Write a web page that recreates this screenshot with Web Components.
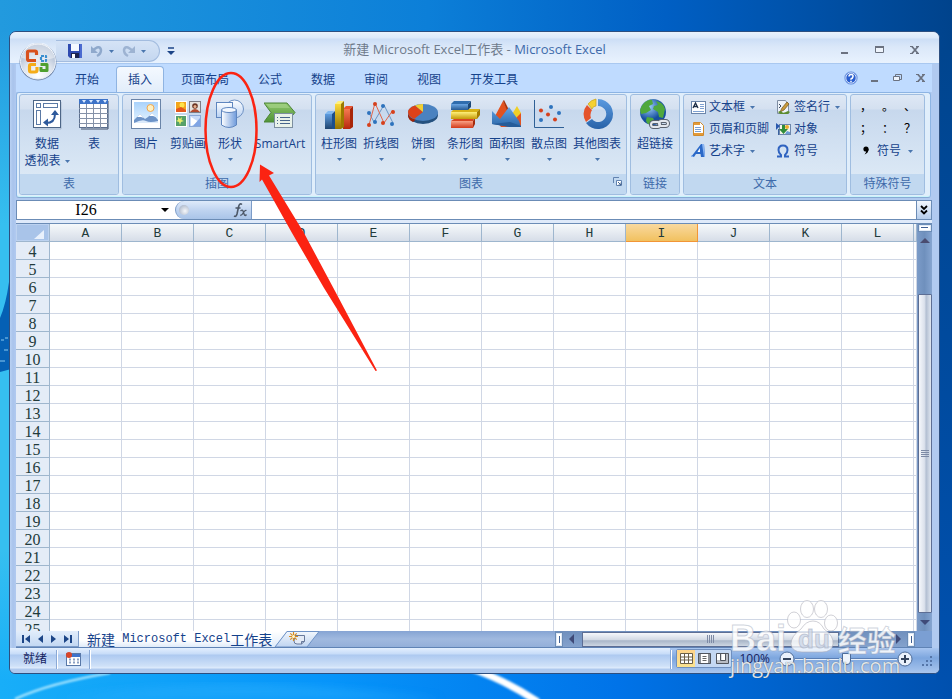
<!DOCTYPE html>
<html lang="zh-CN">
<head>
<meta charset="utf-8">
<title>新建 Microsoft Excel工作表 - Microsoft Excel</title>
<style>
html, body { height: 100%; margin: 0; }
body { font: 12px/16px "Open Sans", "Noto Sans CJK SC", sans-serif; color: #15428b; overflow: hidden; }
</style>
</head>
<body>
<xl-desktop>
  <xl-window>
    <xl-title-bar slot="title" document="新建 Microsoft Excel工作表" app="Microsoft Excel"></xl-title-bar>
    <xl-office-button slot="office"></xl-office-button>
    <xl-tab-strip slot="tabs" tabs="开始,插入,页面布局,公式,数据,审阅,视图,开发工具" selected="插入"></xl-tab-strip>
    <xl-ribbon slot="ribbon">
      <xl-group label="表">
        <xl-big-button icon="pivot" size="wide" menu="inline">数据<br>透视表</xl-big-button>
        <xl-big-button icon="table">表</xl-big-button>
      </xl-group>
      <xl-group label="插图">
        <xl-big-button icon="picture">图片</xl-big-button>
        <xl-big-button icon="clipart">剪贴画</xl-big-button>
        <xl-big-button icon="shapes" menu="below">形状</xl-big-button>
        <xl-big-button icon="smartart" size="wider">SmartArt</xl-big-button>
      </xl-group>
      <xl-group label="图表" launcher>
        <xl-big-button icon="column" menu="below">柱形图</xl-big-button>
        <xl-big-button icon="line" menu="below">折线图</xl-big-button>
        <xl-big-button icon="pie" menu="below">饼图</xl-big-button>
        <xl-big-button icon="bar" menu="below">条形图</xl-big-button>
        <xl-big-button icon="area" menu="below">面积图</xl-big-button>
        <xl-big-button icon="scatter" menu="below">散点图</xl-big-button>
        <xl-big-button icon="donut" size="wide" menu="below">其他图表</xl-big-button>
      </xl-group>
      <xl-group label="链接">
        <xl-big-button icon="globe">超链接</xl-big-button>
      </xl-group>
      <xl-group label="文本">
        <xl-button-grid>
          <xl-small-button icon="textbox" menu>文本框</xl-small-button>
          <xl-small-button icon="sign" menu>签名行</xl-small-button>
          <xl-small-button icon="header">页眉和页脚</xl-small-button>
          <xl-small-button icon="object">对象</xl-small-button>
          <xl-small-button icon="wordart" menu>艺术字</xl-small-button>
          <xl-small-button icon="omega">符号</xl-small-button>
        </xl-button-grid>
      </xl-group>
      <xl-group label="特殊符号">
        <xl-symbols></xl-symbols>
      </xl-group>
    </xl-ribbon>
    <xl-formula-bar slot="formula" cell="I26"></xl-formula-bar>
    <xl-grid slot="grid" first="4" last="25" columns="ABCDEFGHIJKL" active="I"></xl-grid>
    <xl-sheet-bar slot="sheets"></xl-sheet-bar>
    <xl-status-bar slot="status">就绪</xl-status-bar>
  </xl-window>
  <xl-callout slot="over"></xl-callout>
  <xl-watermark slot="over"></xl-watermark>
</xl-desktop>

<script>
const S = (w, h, body) => `<svg width="${w}" height="${h}" viewBox="0 0 ${w} ${h}" aria-hidden="true">${body}</svg>`;
const lg = (id, a, b, v = true) => `<linearGradient id="${id}" x1="0" y1="0" x2="${v ? 0 : 1}" y2="${v ? 1 : 0}"><stop offset="0" stop-color="${a}"/><stop offset="1" stop-color="${b}"/></linearGradient>`;
const ARROW = S(5, 3, '<path d="M0 0h5L2.500 3z" fill="#4a76ae"/>');

const ICONS = {
  pivot: S(32, 32, `<path d="M4 31h26V4" fill="none" stroke="#8fa0b8" opacity=".6"/><rect x="2.500" y="2.500" width="27" height="27" fill="#fff" stroke="#4d6687"/>
    <g fill="#fff" stroke="#5b7aa5"><rect x="5.500" y="5.500" width="4" height="4"/><rect x="12.500" y="5.500" width="14" height="4"/><rect x="5.500" y="12.500" width="4" height="14"/></g>
    <path d="M15 25q9 0 9-9" fill="none" stroke="#2f5a9c" stroke-width="2"/><path d="M20 17l4-5 4 5zM17 20.500v8l-5-4z" fill="#2f5a9c"/>`),
  table: S(32, 32, `<path d="M3 31h27V3" fill="none" stroke="#44536a"/><rect x="1.500" y="1.500" width="28" height="28" fill="#fff" stroke="#5b6f8e"/><rect x="1" y="1" width="29" height="5" fill="#3d73c8"/>
    <path d="M4 2h4l-2 3zM11 2h4l-2 3zM18 2h4l-2 3zM25 2h4l-2 3z" fill="#dcebff"/><path d="M8.500 6v24M15.500 6v24M22.500 6v24M1 10.500h29M1 15.500h29M1 20.500h29M1 25.500h29" stroke="#8592a8"/>`),
  picture: S(32, 32, `<defs>${lg('p', '#a9d2fb', '#e6f4ff')}</defs><rect x="1.500" y="1.500" width="29" height="29" fill="#fff" stroke="#6a84a8"/><rect x="4" y="4" width="24" height="21" fill="url(#p)"/>
    <circle cx="20.500" cy="10" r="3.500" fill="#fff0c0" stroke="#f2a64c"/><path d="M4 25v-3l6-6 5 5 3-2 4-4 6 7v3z" fill="#6e94c8"/><path d="M7 19l3-3 4 4-3-1zM19 18l3-3 4 4-3-1z" fill="#fff"/><path d="M4 25q8-4 12-2t12 0v2z" fill="#dceafa"/>`),
  clipart: S(32, 32, `<g stroke="#fff"><rect x="3.500" y="3.500" width="11" height="11" fill="#f3a51c"/><rect x="17.500" y="3.500" width="11" height="11" fill="#e6e2de" stroke="#7d7d86"/><rect x="3.500" y="17.500" width="11" height="11" fill="#57a06a"/><rect x="17.500" y="17.500" width="11" height="11" fill="#c8dbf8" stroke="#8aa8d8"/></g>
    <circle cx="10" cy="7" r="2.500" fill="#ffe34a"/><path d="M4 11l5-2 5 3v2H4z" fill="#e5571d"/><circle cx="23" cy="8" r="2.800" fill="#6b3423"/><circle cx="23" cy="8.500" r="1.500" fill="#e9b08d"/><path d="M18 14q5-6 10 0z" fill="#b34a2e"/>
    <path d="M6 19l2 2 2-2-.5 3 2.500 1-3 1-1 3-1-3-3-1 2-1z" fill="#e6ee6a"/><path d="M19 19l8 5-8 4z" fill="#fff"/><path d="M21 28l7-8v8z" fill="#7fa4e4"/>`),
  shapes: S(32, 32, `<defs>${lg('a', '#fdfeff', '#b8d1f2')}${lg('b', '#fff', '#6f9bdc', false)}</defs><circle cx="20.500" cy="11" r="9" fill="url(#a)" stroke="#6f92c4"/><rect x="2.500" y="4.500" width="16" height="15" fill="url(#a)" stroke="#5f86bf"/>
    <path d="M7.500 12v15q7.500 5 15 0V12z" fill="url(#b)" stroke="#5f86bf"/><ellipse cx="15" cy="12" rx="7.500" ry="2.500" fill="#f3f8ff" stroke="#5f86bf"/>`),
  smartart: S(32, 32, `<defs>${lg('g', '#8fc66c', '#4f9437')}</defs><path d="M0 5h23l8 9.500L23 24H0l7-9.500z" fill="url(#g)" stroke="#4c8538"/><path d="M2 6h20l4 4H6z" fill="#a8d58c" opacity=".6"/><rect x="10.500" y="15.500" width="18" height="14" fill="#e9f2ea" stroke="#7c8fa0"/><path d="M16 19.500h10M16 22.500h10M16 25.500h10" stroke="#47658c"/><path d="M13 19.500h1M13 22.500h1M13 25.500h1" stroke="#47658c"/>`),
  column: S(32, 32, `<defs>${lg('b', '#5d9ce0', '#1f4470')}${lg('y', '#fbd93a', '#987400')}${lg('r', '#f47a52', '#b8260c')}</defs>
    <path d="M2 16h7v15H2z" fill="url(#b)"/><path d="M2 16l3-3h6l-2 3z" fill="#7fb7ef"/><path d="M9 16l3-3v18H9z" fill="#1c4f8c"/>
    <path d="M20 11h7v20h-7z" fill="url(#r)"/><path d="M20 11l3-3h7l-3 3z" fill="#ee5430"/><path d="M27 11l3-3v21l-3 2z" fill="#a82508"/>
    <path d="M12 6h6v25h-6z" fill="url(#y)"/><path d="M12 6l3-3h6l-3 3z" fill="#fff07a"/><path d="M18 6l3-3v26l-3 2z" fill="#9c7900"/>`),
  line: S(32, 32, `<g fill="none"><path d="M4 15l5 9 10-17 9 18" stroke="#6b96c4"/><path d="M4 27l6-22 9 20 9-13" stroke="#e0654a"/></g><g fill="#2e73bd"><circle cx="4" cy="15" r="2"/><circle cx="10" cy="24" r="2"/><circle cx="18" cy="8" r="2"/><circle cx="27" cy="26" r="2"/></g><g fill="#d6401c"><circle cx="4" cy="27" r="2"/><circle cx="10" cy="6" r="2"/><circle cx="18" cy="25" r="2"/><circle cx="28" cy="14" r="2"/></g>`),
  pie: S(32, 32, `<ellipse cx="16" cy="17" rx="15" ry="9" fill="#25517f"/><path d="M1 14v3q0 5 5 7l10-9z" fill="#a32306"/><ellipse cx="16" cy="14.500" rx="15" ry="8.500" fill="#4a82c0"/><path d="M16 14L7 21Q1 18 1 14q0-4 7-6.500z" fill="#dd4219"/><path d="M16 14L8 7.500q3-1.500 8-1.500z" fill="#f2cf32"/>`),
  bar: S(32, 32, `<defs>${lg('b', '#6ba6e4', '#265a94')}${lg('y', '#fff07a', '#c49a08')}${lg('r', '#f9a286', '#d23a1a')}</defs>
    <path d="M2 23h22v7H2z" fill="url(#r)"/><path d="M2 23l3-2h20l-1 2z" fill="#d84623"/><path d="M24 23l2-3v6l-2 4z" fill="#a52a0c"/>
    <path d="M2 14h26v7H2z" fill="url(#y)"/><path d="M2 14l3-3h26l-3 3z" fill="#d9b316"/><path d="M28 14l3-3v6l-3 4z" fill="#a47d00"/>
    <path d="M2 6h17v6H2z" fill="url(#b)"/><path d="M2 6l3-3h17l-3 3z" fill="#2e6cae"/><path d="M19 6l3-3v6l-3 3z" fill="#1c4878"/>`),
  area: S(32, 32, `<defs>${lg('b', '#62a4e6', '#2b66a7')}</defs><path d="M20 18l6-10 4 7v12z" fill="#efcf26"/><path d="M3 20L12 3l6 12 4 8 8-8v14H10z" fill="#e2521f"/><path d="M12 3l1-1 6 12-1 3z" fill="#a83208"/><path d="M1 13l8 8 9-12 10 14 2 6H19L1 26z" fill="url(#b)"/><path d="M1 26l18 3h11v-1l-11-4z" fill="#265c99"/>`),
  scatter: S(32, 32, `<path d="M1.500 2v27.500H31" fill="none" stroke="#2f6096"/><g fill="#2e73bd"><circle cx="18" cy="9" r="2"/><circle cx="26" cy="15" r="2"/><circle cx="8" cy="22" r="2"/></g><g fill="#d6401c"><circle cx="8" cy="12.500" r="2"/><circle cx="15" cy="16.500" r="2"/><circle cx="22" cy="21.500" r="2"/></g>`),
  donut: S(32, 32, `<defs>${lg('b', '#5a9ae0', '#2862a8')}</defs><path d="M17 1a15 15 0 1 1-12 24l6-4a8 8 0 1 0 6-13z" fill="url(#b)"/><path d="M5 24A14 14 0 0 1 6 7l5 5a9 9 0 0 0-1 8z" fill="#e4532b"/><path d="M7 6q3-4 8-5v7q-3 0-4 3z" fill="#f5d132" stroke="#c9a017" stroke-width=".7"/>`),
  globe: S(32, 32, `<defs><radialGradient id="o" cx=".35" cy=".3"><stop offset="0" stop-color="#9fd0fb"/><stop offset="1" stop-color="#164f9e"/></radialGradient></defs><circle cx="14" cy="14" r="13" fill="url(#o)"/><path d="M5 5q5-4 8-3l1 4-4 2 2 4-5 3-5 1-1-4q1-4 4-7zM17 3q7 1 9 8l-2 9-4-1-1-5-5-3 1-3 4-1zM8 19l6 1 2 4-4 3q-5-1-5-5z" fill="#4fa83c"/>
    <g fill="none" stroke="#59626e" stroke-width="4"><rect x="12" y="24" width="9" height="5" rx="2.500"/><rect x="20" y="23" width="9" height="5" rx="2.500"/></g><g fill="none" stroke="#e4e8ee" stroke-width="2"><rect x="12" y="24" width="9" height="5" rx="2.500"/><rect x="20" y="23" width="9" height="5" rx="2.500"/></g>`),
  textbox: S(16, 16, `<rect x="1.500" y="2.500" width="14" height="12" fill="#fff" stroke="#6c86ab"/><path d="M3 9l2.500-5L8 9M4 7.500h3" fill="none" stroke="#1d2d46" stroke-width="1.300"/><path d="M10 5.500h4M10 7.500h4M10 9.500h4M3 12.500h11" stroke="#7ea1d2"/>`),
  header: S(16, 16, `<path d="M3.500 1.500h7l3 3v10h-10z" fill="#fff" stroke="#d08a2c"/><path d="M4 3h6M4 13h9" stroke="#e39a37" stroke-width="2"/><path d="M5 6.500h6M5 8.500h6M5 10.500h6" stroke="#7ba0d2"/>`),
  wordart: S(16, 16, `<path d="M1 14L11 1h3l1 13h-4l-.5-3H6l-2 3z" fill="#2b69c8"/><path d="M7.500 9H10l-.2-4z" fill="#fff"/><path d="M12 1l2 13h1L14 1zM1 12l3 2H1z" fill="#8ab5f2"/>`),
  sign: S(16, 16, `<path d="M2.500 1.500h8l3 4v9h-11z" fill="#eef3fa" stroke="#7f8ea3"/><path d="M4 5l2 2M4 9l2-2" stroke="#3b4b62"/><path d="M14 5l-5 6-4 2 2-4 5-6z" fill="#c89a3c" stroke="#705018" stroke-width=".7"/><path d="M3 13q3-2 4 0t6-1l2 1-2 2H5z" fill="#5c8c30"/>`),
  object: S(16, 16, `<rect x="4.500" y="3.500" width="11" height="10" fill="#f3f4e6" stroke="#6c86ab"/><circle cx="12" cy="6" r="2" fill="#edae2f"/><path d="M10 13l2-3 3 1v2z" fill="#6b9cd6"/><path d="M1 2l4 3-4 4z" fill="#2959ae"/><path d="M7 4h3v4h3l-4.500 5L4 8h3z" fill="#2f8c3a"/><path d="M3 8h1v6h-1z" fill="#3b62a0"/>`),
  omega: S(16, 16, `<path d="M2 13.500h4v-1.500Q3.500 10 3.500 7q0-4.500 4.500-4.500T12.500 7q0 3-2.500 5v1.500h4" fill="none" stroke="#2f63c0" stroke-width="2"/>`),
  comma: S(8, 12, `<circle cx="4" cy="4" r="2.600" fill="#000"/><path d="M6.600 4q0 4-4 5.500Q5 7 4 5z" fill="#000"/>`),
  save: S(16, 16, `<path d="M1 1h14v14H3l-2-2z" fill="#2f4bb0"/><path d="M4 1h8v7H4z" fill="#f4f8ff"/><path d="M4 10h8v5H4z" fill="#1b2450"/><path d="M5 11h3v4H5z" fill="#fff"/><path d="M13 1h2v14h-2z" fill="#4b6bd0"/>`),
  undo: S(16, 16, `<path d="M3 8q8-7 9-1 0 4-4 6" fill="none" stroke="#8fa9cc" stroke-width="2.500"/><path d="M2 3v7h7z" fill="#8fa9cc"/>`),
  redo: S(16, 16, `<path d="M12 8q-8-7-9-1 0 4 4 6" fill="none" stroke="#9db3d2" stroke-width="2.500"/><path d="M14 3v7H7z" fill="#9db3d2"/>`),
  more: S(8, 8, `<path d="M1 1h6" stroke="#1c4587" stroke-width="1.500"/><path d="M0 4h8L4 8z" fill="#1c4587"/>`),
  min: S(10, 12, `<path d="M1 9h7" stroke="#6b7280" stroke-width="2"/>`),
  max: S(12, 12, `<path d="M1.500 2.500h8v6h-8z" fill="#eef4fc" stroke="#6b7280"/><path d="M1 3h9" stroke="#6b7280" stroke-width="2"/>`),
  restore: S(12, 12, `<path d="M3.500 4V2.500h6v5H8" fill="none" stroke="#6b7280"/><path d="M1.500 4.500h6v4h-6z" fill="#eef4fc" stroke="#6b7280"/>`),
  close: S(10, 12, `<path d="M2 2.500l6 7M8 2.500l-6 7" stroke="#6b7280" stroke-width="1.800"/><path d="M0 2.500h3M6 2.500h3M0 9.500h3M6 9.500h3" stroke="#6b7280"/>`),
  help: S(14, 14, `<circle cx="7" cy="7" r="6.300" fill="#2a5fd0" stroke="#8eb0ea"/><circle cx="7" cy="7" r="5.200" fill="none" stroke="#fff" stroke-width=".8"/><path d="M5 5.500Q5 3.500 7.200 3.500T9 5.500 7 8v.8M7 9.800v1.400" fill="none" stroke="#fff" stroke-width="1.500"/>`),
  launcher: S(9, 9, `<path d="M.5 6V.5H6" fill="none" stroke="#6283b0"/><path d="M3.500 3.500h5v5h-5z" fill="#fff" stroke="#6283b0"/><path d="M5 5l3 3M8 5.500V8H5.500" stroke="#44648f" fill="none"/>`),
  fx: S(16, 16, `<g fill="none" stroke="#4c5767"><path d="M10 2.500Q7.500.5 6.500 5L5 12q-.8 3.200-3 2M3.500 6h5" stroke-width="1.600"/><path d="M8.500 9q2-2 2.700.5l1 3q.7 2 2.300 0M14.500 8.500q-1.500-.8-3 2t-3.200 3" stroke-width="1.300"/></g>`),
  first: S(10, 8, `<path d="M1 0h2v8H1zM9 0v8L4 4z" fill="#1c4587"/>`),
  prev: S(6, 8, `<path d="M5 0v8L0 4z" fill="#1c4587"/>`),
  next: S(6, 8, `<path d="M1 0v8l5-4z" fill="#1c4587"/>`),
  last: S(10, 8, `<path d="M7 0h2v8H7zM1 0v8l5-4z" fill="#1c4587"/>`),
  left: S(6, 10, `<path d="M5 0v10L0 5z" fill="#3f4a78"/>`),
  right: S(6, 10, `<path d="M1 0v10l5-5z" fill="#3f4a78"/>`),
  up: S(10, 6, `<path d="M0 5h10L5 0z" fill="#4a4c70"/>`),
  down: S(10, 6, `<path d="M0 1h10L5 6z" fill="#3f4a78"/>`),
  expand: S(8, 10, `<path d="M1 1l3 3 3-3M1 5.500l3 3 3-3" fill="none" stroke="#000" stroke-width="1.800"/>`),
  macro: S(16, 16, `<rect x="1.500" y="2.500" width="14" height="12" fill="#fff" stroke="#5878a8"/><path d="M5 3h10v3H5z" fill="#3f73cc"/><path d="M4 8.500h10M4 11.500h10" stroke="#8aa0c4" stroke-width="2" stroke-dasharray="2 2"/><circle cx="4" cy="4" r="3" fill="#d9452a"/>`),
  newsheet: S(18, 15, `<path d="M6 3.500h9.500v6l-3 2.500H8q-3 0-3-3z" fill="#e4ebf6" stroke="#68799a"/><path d="M12.500 12V9.500h3" fill="#9fb0cc" stroke="#68799a"/><path d="M4.500 0v9M0 4.500h9M1.300 1.300l6.400 6.400M7.700 1.300L1.300 7.700" stroke="#d98c1f" stroke-width="1.200"/><circle cx="4.500" cy="4.500" r="1.500" fill="#fff6c8"/>`),
  normal: S(13, 11, `<path d="M.5.5h12v10H.5z" fill="#fff" stroke="#6b5f48"/><path d="M4.500 0v11M8.500 0v11M0 4h13M0 7h13" stroke="#6b5f48"/>`),
  layout: S(13, 11, `<path d="M.5.5h12v10H.5z" fill="#8b8f96" stroke="#50555e"/><path d="M3 1h7v9H3z" fill="#fff"/><path d="M4.500 3.500h4M4.500 5.500h4M4.500 7.500h4" stroke="#666"/>`),
  breaks: S(13, 11, `<path d="M.5.5h12v10H.5z" fill="#b8bcc4" stroke="#50555e"/><path d="M1 1h3v6H1zM5.500 1H9v6H5.500z" fill="#fff"/><path d="M4.500 0v7.500h5V0" fill="none" stroke="#50555e"/>`),
  minus: S(16, 16, `<circle cx="8" cy="8" r="7" fill="#e9f1fc" stroke="#4e6c99"/><path d="M4 8h8" stroke="#33435c" stroke-width="2"/>`),
  plus: S(16, 16, `<circle cx="8" cy="8" r="7" fill="#e9f1fc" stroke="#4e6c99"/><path d="M4 8h8M8 4v8" stroke="#33435c" stroke-width="2"/>`),
  grip: S(12, 12, `<g fill="#5475a8"><path d="M9 1h2v2H9zM5 5h2v2H5zM9 5h2v2H9zM1 9h2v2H1zM5 9h2v2H5zM9 9h2v2H9z"/></g>`),
  office: S(38, 38, `<defs><radialGradient id="w" cx=".5" cy=".9" r=".85"><stop offset="0" stop-color="#fff"/><stop offset=".5" stop-color="#dfe5ee"/><stop offset="1" stop-color="#9fb0ca"/></radialGradient></defs>
    <circle cx="19" cy="19" r="18.500" fill="#7489ab"/><circle cx="19" cy="18.500" r="17.500" fill="url(#w)" stroke="#eef3fa"/><path d="M3 15a16 16 0 0 1 32 0q-16 5-32 0z" fill="#fff" opacity=".45"/>
    <g fill="none" stroke-width="3.200" stroke-linejoin="round"><path d="M17 17.500h-7q-1.500 0-1.500-1.500V9.500Q8.500 8 10 8h6q1.500 0 1.500 1.500V12" stroke="#d8501c"/><path d="M22 13h5v5h-5z" stroke="#3a8fd0" stroke-width="2.200" stroke-dasharray="3 1"/><path d="M17 21.500h-5q-1.500 0-1.500 1.500v4q0 2 1.500 2h4q2 0 2-2v-3" stroke="#f5ac18"/><path d="M21.500 21.500H28v6h-6V24" stroke="#4fa02f" stroke-width="3"/></g>`),
};

/* Registers an element whose shadow root is cloned from a template built by render(). */
function define(name, css, render) {
  customElements.define(name, class extends HTMLElement {
    connectedCallback() {
      if (this.shadowRoot) return;
      const t = document.createElement('template');
      t.innerHTML = `<style>*{box-sizing:border-box}button{all:unset;box-sizing:border-box;cursor:default}svg{display:block;flex:none}${css}</style>${render(this)}`;
      this.attachShadow({ mode: 'open' }).append(t.content.cloneNode(true));
    }
  });
}
const btn = (icon, label, cls = '') => `<button class="${cls}" aria-label="${label}">${ICONS[icon]}</button>`;

define('xl-desktop', `
  :host{display:block;position:relative;min-height:100vh;padding:31px 12px 25px 9px;box-sizing:border-box}
  .wall{position:absolute;inset:0;width:100%;height:100%}
  main{position:relative;height:calc(100vh - 56px)}`,
  () => `<svg class="wall" viewBox="0 0 952 699" preserveAspectRatio="none" aria-hidden="true"><defs>
    <linearGradient id="h" x1="0" x2="1"><stop offset="0" stop-color="#229ade"/><stop offset=".45" stop-color="#0c7fd8"/><stop offset=".7" stop-color="#005fc4"/><stop offset="1" stop-color="#00438c"/></linearGradient>
    <linearGradient id="f" x1="0" x2="1"><stop offset="0" stop-color="#18aef8"/><stop offset=".35" stop-color="#0694fa"/><stop offset=".65" stop-color="#0073e8"/><stop offset="1" stop-color="#0050ae"/></linearGradient>
    <linearGradient id="l" x1="0" y1="0" x2="0" y2="1"><stop offset="0" stop-color="#229ade"/><stop offset=".3" stop-color="#36bff0"/><stop offset=".8" stop-color="#36bff0"/><stop offset="1" stop-color="#18aef8"/></linearGradient>
    ${lg('r', '#00458f', '#0050ae')}
    <filter id="b"><feGaussianBlur stdDeviation="1"/></filter><filter id="c"><feGaussianBlur stdDeviation="4"/></filter></defs>
    <rect width="952" height="699" fill="url(#f)"/><rect width="952" height="60" fill="url(#h)"/><rect x="936" y="50" width="16" height="630" fill="url(#r)"/>
    <rect y="30" width="20" height="650" fill="url(#l)"/><path d="M0 372V318q6-14 9-36h6v86z" fill="#0560b4"/><path d="M1 340h3M4 350h4M0 361h5M5 338h3" stroke="#8cc9f0"/>
    <path d="M15 699Q50 683 110 673" stroke="#b9ecff" stroke-width="2" fill="none" filter="url(#b)"/>
    <path d="M60 699Q200 676 330 688T440 699z" fill="#2aaefc" opacity=".5" filter="url(#c)"/><path d="M470 668Q505 680 538 702" stroke="#fff" stroke-width="7" fill="none" filter="url(#b)"/></svg>
    <main><slot></slot></main><slot name="over"></slot>`);

define('xl-window', `
  :host{display:flex;flex-direction:column;position:relative;height:100%;box-sizing:border-box;border:1px solid #2d4f80;border-radius:7px 7px 6px 6px;background:#b1caf0;overflow:hidden}
  .frame{flex:1;min-height:0;display:flex;flex-direction:column;padding:0 7px 0 6px;background:linear-gradient(90deg,#b9d1f3,#a9c4ec 3px,#b1caf0 6px)}
  .sheet{flex:1;min-height:0;margin-top:3px;display:flex;flex-direction:column;border-top:1px solid #6b8cb6;box-shadow:0 -3px #dfeafa}
  ::slotted([slot=office]){position:absolute;left:9px;top:11px}`,
  () => `<slot name="title"></slot><div class="frame"><slot name="tabs"></slot><slot name="ribbon"></slot><slot name="formula"></slot>
    <div class="sheet"><slot name="grid"></slot><slot name="sheets"></slot></div></div><slot name="status"></slot><slot name="office"></slot>`);

define('xl-title-bar', `
  :host{display:grid;grid-template-columns:1fr auto 1fr;align-items:center;height:32px;box-sizing:border-box;border-bottom:1px solid #a9c8f0;
    background:linear-gradient(#e9f2fd 0,#dce9fa 6px,#ccdef6 7px,#dbe8f9 15px,#e8f2fe 31px)}
  .qat{display:flex;align-items:center;gap:7px;margin-left:46px;height:22px}
  .pill{display:flex;align-items:center;height:22px;padding:0 13px 0 11px;border:1px solid #a3bcdf;border-left:0;border-radius:0 11px 11px 0;background:linear-gradient(#d5e3f6,#c4d7f0);margin-top:7px}
  .pill button:nth-child(1){margin-right:6px}.pill button:nth-child(2),.pill button:nth-child(4){margin-right:4px}.pill button:nth-child(3){margin-right:7px}
  .more{margin-top:7px}
  h1{margin:2px 0 0;font:inherit;font-size:13px;color:#3e6aaa;white-space:pre} h1 span{color:#6f7b8c}
  .win{display:flex;justify-content:flex-end;gap:24px;padding:4px 19px 0 0}`,
  h => `<div class="qat"><div class="pill">${btn('save', '保存')}${btn('undo', '撤消')}<button aria-label="撤消列表">${ARROW}</button>${btn('redo', '恢复')}<button aria-label="恢复列表">${ARROW}</button></div>${btn('more', '自定义快速访问工具栏', 'more')}</div>
    <h1><span>${h.getAttribute('document')} - </span>${h.getAttribute('app')}</h1>
    <div class="win">${btn('min', '最小化')}${btn('max', '最大化')}${btn('close', '关闭')}</div>`);

define('xl-office-button', `:host{display:block}`, () => btn('office', 'Office 按钮'));

define('xl-tab-strip', `
  :host{display:flex;justify-content:space-between;align-items:flex-end;height:28px;padding-left:47px;background:#bfdbff}
  nav{display:flex;gap:5px} nav button{height:26px;padding:0 11px;line-height:24px;border:1px solid transparent;border-bottom:0;white-space:nowrap}
  nav button[aria-selected=true]{border-color:#8fb4e2;border-radius:4px 4px 0 0;background:linear-gradient(#f4f9ff,#e2edfa);box-shadow:0 1px #dfe9f6}
  .right{display:flex;align-items:center;align-self:stretch;gap:12px;padding-right:6px}`,
  h => `<nav role="tablist">${h.getAttribute('tabs').split(',').map(t => `<button role="tab" aria-selected="${t === h.getAttribute('selected')}">${t}</button>`).join('')}</nav>
    <div class="right">${btn('help', '帮助')}${btn('min', '最小化工作簿')}${btn('restore', '还原工作簿')}${btn('close', '关闭工作簿')}</div>`);

define('xl-ribbon', `
  :host{display:flex;gap:3px;margin:0 1px 2px 0;padding:1px 2px 2px;border:1px solid #8db4e3;border-bottom-color:#87aad4;border-radius:3px;background:#e0eefb;box-shadow:inset 0 -1px #c6f4fb;
    box-sizing:border-box;height:106px}`, () => `<slot></slot>`);

define('xl-group', `
  :host{display:flex;flex-direction:column;box-sizing:border-box;border:1px solid #9fbde0;border-radius:3px;overflow:hidden;background:linear-gradient(#dee8f5 0,#d4e0f0 14px,#c7d8ed 15px,#d2e1f2 50px,#dbe8f5 80px)}
  .body{flex:1;display:flex;padding:0 2px}
  footer{position:relative;height:20px;background:#c1d8f0;color:#3e6aaa;text-align:center;line-height:20px}
  footer button{position:absolute;right:4px;top:3px}`,
  h => `<div class="body"><slot></slot></div><footer>${h.getAttribute('label')}${h.hasAttribute('launcher') ? btn('launcher', '图表选项') : ''}</footer>`);

define('xl-big-button', `
  :host{display:block;min-width:42px} :host([icon=table]),:host([icon=globe]){min-width:44px} :host([size=wide]){min-width:54px} :host([size=wider]){min-width:58px} :host([icon=pivot]){min-width:50px}
  button{display:flex;flex-direction:column;align-items:center;width:100%;padding-top:3px;white-space:nowrap}
  .label{margin-top:5px;line-height:17px;text-align:center} .below{margin-top:6px} .label svg{display:inline-block;vertical-align:middle;margin-left:4px}`,
  h => `<button>${ICONS[h.getAttribute('icon')]}<span class="label"><slot></slot>${h.getAttribute('menu') === 'inline' ? ARROW : ''}</span>${h.getAttribute('menu') === 'below' ? `<span class="below">${ARROW}</span>` : ''}</button>`);

define('xl-button-grid', `:host{display:grid;grid-template-columns:auto auto;grid-auto-rows:22px;column-gap:6px;padding:1px 4px 0 4px;align-content:start}`, () => `<slot></slot>`);

define('xl-small-button', `
  :host{display:block} button{display:flex;align-items:center;height:22px;gap:3px;white-space:nowrap} button>svg:last-child{margin-left:2px}`,
  h => `<button>${ICONS[h.getAttribute('icon')]}<span><slot></slot></span>${h.hasAttribute('menu') ? ARROW : ''}</button>`);

define('xl-symbols', `
  :host{display:grid;grid-template-columns:repeat(3,22px);grid-auto-rows:22px;padding:1px 1px 0 2px;align-content:start}
  button{text-align:center;color:#000;line-height:22px} .menu{grid-column:1/4;display:flex;align-items:center;gap:7px;color:#15428b;padding-left:7px}`,
  () => ['，', '。', '、', '；', '：', '？'].map(c => `<button>${c}</button>`).join('') + `<button class="menu">${ICONS.comma}<span>符号</span>${ARROW}</button>`);

define('xl-formula-bar', `
  :host{display:flex;height:20px;box-sizing:border-box;border:1px solid #6b8cb6;border-right:0;background:#fff}
  input{border:0;padding:0;margin:0;background:none;outline:0;min-width:0;color:#000}
  .name{width:138px;text-align:center;font:16px/18px "Liberation Serif","Noto Sans CJK SC",serif}
  .drop{display:flex;align-items:center;width:20px;padding-left:6px}
  .fx{display:flex;align-items:center;justify-content:space-between;width:77px;padding:0 3px;border:1px solid #7b9cc8;border-width:0 1px;border-radius:9px 0 0 9px;background:linear-gradient(#dfeafa,#c0d4f0 50%,#a9c4e8)}
  .knob{width:10px;height:10px;border-radius:50%;background:radial-gradient(circle at 60% 60%,#f6f8fb,#9aa8be)}
  .formula{flex:1;padding-left:4px}
  .expand{display:flex;align-items:center;justify-content:center;width:16px;border:1px solid #6b8cb6;border-width:0 1px;background:linear-gradient(#f2f7fd,#b5cdec)}`,
  h => `<input class="name" aria-label="名称框" value="${h.getAttribute('cell')}"><button class="drop" aria-label="名称列表">${S(8, 4, '<path d="M0 0h8L4 4z" fill="#000"/>')}</button>
    <div class="fx"><span class="knob"></span>${btn('fx', '插入函数')}</div><input class="formula" aria-label="编辑栏">${btn('expand', '展开编辑栏', 'expand')}`);

define('xl-grid', `
  :host{display:flex;flex:1;min-height:0;background:#fff}
  .view{flex:1;min-width:0;overflow:hidden}
  table{border-collapse:separate;border-spacing:0;table-layout:fixed;width:100%}
  .rh{width:34px}.c{width:72px}
  tr{height:18px} td,th{height:18px;padding:0;border:0 solid #d0d7e5;border-width:0 1px 1px 0;font-weight:400;overflow:hidden}
  thead th{border-color:#9eb6ce;padding-top:2px;background:linear-gradient(#f6f9fb,#d6dde8);color:#223b3b;font:13px/15px "Liberation Mono",monospace}
  thead th.on{background:linear-gradient(#f9d99f,#f1c15f);border-color:#f29536}
  thead th.corner{background:#a9c4e9;box-shadow:inset 0 0 0 1px #bcd2f0} .corner svg{margin:2px 4px 0 auto}
  tbody th{border-color:#9eb6ce;padding-top:2px;background:#e4ecf7;color:#223b3b;font:16px/15px "Liberation Serif",serif}
  .bar{display:flex;flex-direction:column;align-items:center;width:15px;background:linear-gradient(90deg,#7b9bc8,#6f90bd 50%,#86a5d0)}
  .split{width:14px;height:8px;border:1px solid #6b8cb6;background:#fff;box-shadow:inset 0 0 0 1px #dfe9f6} .split::after{content:"";display:block;margin:2px auto;width:7px;height:1px;background:#3e5f94}
  .up{margin:6px 0 50px} .thumb{flex:1;display:grid;place-items:center;width:14px;border:1px solid #5d6e94;border-radius:1px;background:linear-gradient(90deg,#f5f7fb,#dbe1ec 45%,#b3bfd2 60%,#dfe6f0)} .down{margin:6px 0}`,
  h => {
    const cols = [...h.getAttribute('columns')], rows = [];
    for (let r = +h.getAttribute('first'); r <= +h.getAttribute('last'); r++) rows.push(`<tr><th scope="row">${r}</th>${'<td></td>'.repeat(cols.length + 1)}</tr>`);
    return `<div class="view"><table><colgroup><col class="rh">${'<col class="c">'.repeat(cols.length)}<col></colgroup>
      <thead><tr><th class="corner">${S(11, 10, '<path d="M10 0v9H0z" fill="#e9f1fc"/>')}</th>${cols.map(c => `<th scope="col"${c === h.getAttribute('active') ? ' class="on"' : ''}>${c}</th>`).join('')}<th></th></tr></thead><tbody>${rows.join('')}</tbody></table></div>
      <div class="bar"><div class="split"></div>${btn('up', '向上滚动', 'up')}<div class="thumb">${S(8, 8, '<path d="M0 .5h8M0 2.500h8M0 4.500h8M0 6.500h8" stroke="#7d8aa5"/>')}</div>${btn('down', '向下滚动', 'down')}</div>`;
  });

define('xl-sheet-bar', `
  :host{display:flex;flex:none;height:17px;box-sizing:border-box;border-bottom:1px solid #5f83b5;background:linear-gradient(#86a4d3,#a0b9df 50%,#93afd9)}
  .nav{display:flex;align-items:center;justify-content:space-between;width:63px;padding:0 5px;border:1px solid #7d9cc9;border-width:0 1px 1px 0;background:linear-gradient(#e2edfb,#c3d8f3)}
  .tab{display:flex;align-items:center;padding:0 0 0 8px;background:linear-gradient(#fff,#fff 9px,#dfebf9);font:12px/16px "Liberation Mono",monospace;white-space:pre}
  .tab b{font:14px/16px "Noto Sans CJK SC",sans-serif}
  .new{display:block;height:16px}`,
  () => `<div class="nav">${btn('first', '第一张')}${btn('prev', '上一张')}${btn('next', '下一张')}${btn('last', '最后一张')}</div>
    <button class="tab"><b>新建</b> Microsoft Excel<b>工作表</b></button><button class="new" aria-label="插入工作表">${S(48, 16, `<defs>${lg('n', '#f2f7fd', '#bfd4f0')}${lg('t', '#fff', '#dfebf9')}</defs><path d="M0 0h15L3 16H0z" fill="url(#t)"/><path d="M3 16L15 .5h32L35 16z" fill="url(#n)" stroke="#6f93c6"/><g transform="translate(17 1)">${ICONS.newsheet}</g>`)}</button>
    <style>.scroll{display:flex;align-items:center;width:360px;margin-left:auto;background:linear-gradient(#6f8fbd,#84a2cd)}
  .split{width:8px;height:15px;border:1px solid #6b8cb6;background:#fff;box-shadow:inset 0 0 0 1px #dfe9f6} .split::after{content:"";display:block;width:1px;height:7px;margin:3px auto;background:#3e5f94}
  .left{margin:0 7px 0 6px}.thumb{width:257px;height:15px;display:grid;place-items:center;border:1px solid #5d6e94;background:linear-gradient(#f5f7fb,#d3dae5 50%,#aab7c9 60%,#cdd6e2)} .right{margin:0 6px 0 auto} .corner{width:17px;align-self:stretch;background:#7b9fd3}</style>
    <div class="scroll"><div class="split"></div>${btn('left', '向左滚动', 'left')}<div class="thumb">${S(8, 8, '<path d="M.5 0v8M2.500 0v8M4.500 0v8M6.500 0v8" stroke="#7d8aa5"/>')}</div>${btn('right', '向右滚动', 'right')}<div class="split"></div></div><div class="corner"></div>`);

define('xl-status-bar', `
  :host{display:flex;align-items:center;flex:none;height:25px;box-sizing:border-box;padding:0 6px 4px 13px;color:#15225e;
    background:linear-gradient(#e3effe 0,#c7dcf8 6px,#adc9f0 7px,#cfe1f8 18px,#dfecfc 20px,#afc9ee 21px)}
  .sep{width:2px;align-self:stretch;margin-top:2px;background:linear-gradient(90deg,#8aa9d6 1px,#fff 1px)}
  .ready{margin-right:9px}.macro{margin:0 8px 0 7px}
  .right{display:flex;align-items:center;align-self:stretch;margin:0 -6px -4px auto;padding:0 6px 4px 0;background:linear-gradient(#a9c6f0,#7da6de 40%,#a9c6ee)}
  .views{display:flex;margin:0 7px 0 4px;border:1px solid #6f8fbe;border-radius:2px;background:#c4d8f3} .views button{height:17px;display:grid;place-items:center;width:18px} .views .on{background:linear-gradient(#fdd38a,#fbe38f)}
  .pct{margin-right:9px} input{appearance:none;width:102px;height:16px;margin:0;background:linear-gradient(transparent 7px,#5b7fb5 7px,#5b7fb5 8px,#e7f0fb 8px,#e7f0fb 9px,transparent 9px)}
  input::-webkit-slider-thumb{appearance:none;width:9px;height:12px;background:#eef4fc;border:1px solid #4e6c99;border-radius:1px 1px 5px 5px} .grip{margin:5px 0 0 8px}`,
  () => `<span class="ready"><slot></slot></span><span class="sep"></span>${btn('macro', '录制宏', 'macro')}<span class="sep"></span>
    <div class="right"><span class="sep"></span><div class="views">${btn('normal', '普通', 'on')}${btn('layout', '页面布局')}${btn('breaks', '分页预览')}</div>
    <span class="pct">100%</span>${btn('minus', '缩小')}<input type="range" min="0" max="200" value="100" aria-label="显示比例">${btn('plus', '放大')}<span class="grip">${ICONS.grip}</span></div>`);

define('xl-callout', `:host{position:absolute;left:200px;top:70px;pointer-events:none}`,
  () => S(180, 304, `<ellipse cx="31" cy="60" rx="25.500" ry="57" fill="none" stroke="#fb2312" stroke-width="2.500"/><path d="M60 94.500L74 103 69 105.500 104 163 135 221 177 300.500 175.500 301 124 218 92 163 62 109.500 59.500 112z" fill="#fb2312"/>`));

define('xl-watermark', `
  :host{position:absolute;right:52px;bottom:21px;display:block;width:170px;color:rgba(255,255,255,.85);pointer-events:none}
  .paw{display:block;margin-left:57px} .row{display:flex;align-items:center;margin-top:-30px;font:bold 36px/30px "Liberation Sans","Noto Sans CJK SC",sans-serif;-webkit-text-stroke:1px rgba(150,160,180,.45)}
  .du{font-size:26px;color:rgba(205,215,232,.8);padding:0 8px 0 12px} .cn{font:bold 29px/30px "Noto Sans CJK SC",sans-serif}
  .url{font:20px/24px "Open Sans",sans-serif;text-shadow:0 0 1px #456}`,
  () => `<div class="paw">${S(54, 54, `<g fill="rgba(255,255,255,.75)" stroke="rgba(170,170,180,.55)"><ellipse cx="7" cy="20" rx="6.500" ry="8"/><ellipse cx="20" cy="9" rx="6.500" ry="8.500"/><ellipse cx="34" cy="9" rx="6.500" ry="8.500"/><ellipse cx="44" cy="23" rx="6.500" ry="8"/><path d="M26 21q7 0 11 8 10 7 9 15-1 8-11 8H15q-10 0-11-8 0-8 10-15 5-8 12-8z"/></g>`)}</div>
    <div class="row"><span>Bai</span><span class="du">du</span><span class="cn">经验</span></div><div class="url">jingyan.baidu.com</div>`);
</script>
</body>
</html>
